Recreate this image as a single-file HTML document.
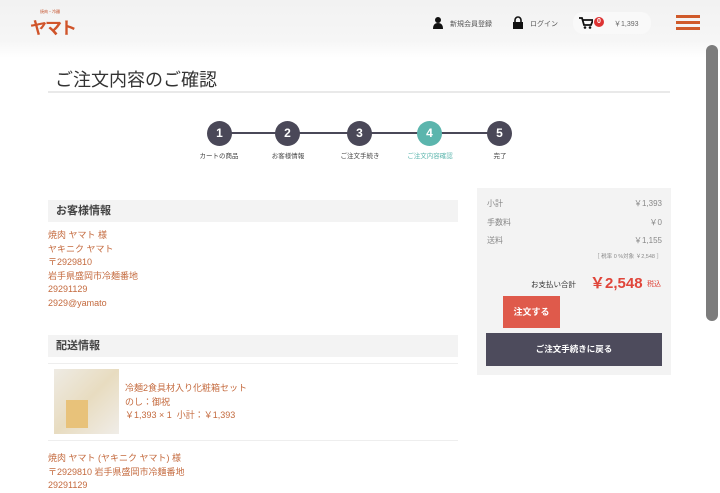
<!DOCTYPE html><html><head><meta charset="utf-8"><style>
*{margin:0;padding:0;box-sizing:border-box}
body{width:720px;height:484px;overflow:hidden;background:#fff;font-family:"Liberation Sans","Noto Sans CJK JP",sans-serif;position:relative}
.a{position:absolute}
.o{color:#c46a3e;font-size:9px;line-height:13.6px}
.c{width:25px;height:25px;border-radius:50%;background:#4a4858;color:#fff;font-weight:bold;font-size:12px;text-align:center;line-height:25px;top:121px}
.l{font-size:6.5px;color:#444;top:150px;width:80px;text-align:center}
.r{font-size:8px;color:#888;left:487px;width:175px}
.r span{float:right}
</style></head><body>
<div class="a" style="left:0;top:0;width:720px;height:58px;background:linear-gradient(#f2f2f2,#f6f6f6 70%,#fff)"></div>
<div class="a" style="left:40px;top:9px;font-size:4px;color:#c4502a">焼肉・冷麺</div>
<div class="a" style="left:30px;top:14px;font-size:17px;font-weight:bold;color:#d0542a;letter-spacing:-2px">ヤマト</div>
<svg class="a" style="left:433px;top:17px" width="10" height="12" viewBox="0 0 10 12"><circle cx="5" cy="3" r="3" fill="#111"/><path d="M0 12 Q0 6 5 6 Q10 6 10 12Z" fill="#111"/></svg>
<div class="a" style="left:450px;top:19px;font-size:7px;color:#555">新規会員登録</div>
<svg class="a" style="left:513px;top:16px" width="10" height="13" viewBox="0 0 10 13"><path d="M2 6V4a3 3 0 0 1 6 0v2" stroke="#111" stroke-width="1.6" fill="none"/><rect x="0" y="6" width="10" height="7" fill="#111"/></svg>
<div class="a" style="left:530px;top:19px;font-size:7px;color:#555">ログイン</div>
<div class="a" style="left:573px;top:12px;width:78px;height:22px;background:#f9f9f9;border-radius:10px"></div>
<svg class="a" style="left:579px;top:17px" width="14" height="12" viewBox="0 0 14 12"><path d="M0 1h3l2 7h7l2-5H4" stroke="#111" stroke-width="1.8" fill="none"/><circle cx="6" cy="10.5" r="1.3" fill="#111"/><circle cx="11" cy="10.5" r="1.3" fill="#111"/></svg>
<div class="a" style="left:594px;top:17px;width:10px;height:10px;border-radius:50%;background:#d33;color:#fff;font-size:7px;text-align:center;line-height:10px;font-weight:bold">0</div>
<div class="a" style="left:614px;top:19px;font-size:7px;color:#666">￥1,393</div>
<div class="a" style="left:676px;top:15px;width:24px;height:3px;background:#d05a2a;box-shadow:0 6px 0 #d05a2a,0 12px 0 #d05a2a"></div>
<div class="a" style="left:706px;top:45px;width:12px;height:276px;background:#7c7c7c;border-radius:6px"></div>
<div class="a" style="left:55px;top:66px;font-size:18px;color:#333">ご注文内容のご確認</div>
<div class="a" style="left:48px;top:91px;width:622px;height:2px;background:#e9e9e9"></div>
<div class="a" style="left:220px;top:132px;width:280px;height:2px;background:#4a4858"></div>
<div class="a c" style="left:207px">1</div><div class="a c" style="left:275px">2</div><div class="a c" style="left:347px">3</div><div class="a c" style="left:417px;background:#5bb5ad">4</div><div class="a c" style="left:487px">5</div>
<div class="a l" style="left:179px">カートの商品</div><div class="a l" style="left:248px">お客様情報</div><div class="a l" style="left:320px">ご注文手続き</div><div class="a l" style="left:390px;color:#5bb5ad">ご注文内容確認</div><div class="a l" style="left:460px">完了</div>
<div class="a" style="left:48px;top:200px;width:410px;height:22px;background:#f3f3f3;font-size:11px;font-weight:bold;color:#444;padding-left:8px;line-height:22px">お客様情報</div>
<div class="a o" style="left:48px;top:229px">焼肉 ヤマト 様<br>ヤキニク ヤマト<br>〒2929810<br>岩手県盛岡市冷麺番地<br>29291129<br>2929@yamato</div>
<div class="a" style="left:48px;top:335px;width:410px;height:22px;background:#f3f3f3;font-size:11px;font-weight:bold;color:#444;padding-left:8px;line-height:22px">配送情報</div>
<div class="a" style="left:48px;top:363px;width:410px;height:1px;background:#eee"></div>
<div class="a" style="left:54px;top:369px;width:65px;height:65px;background:linear-gradient(135deg,#eeebe4,#e8dcc0 50%,#f0ede8)"></div>
<div class="a" style="left:66px;top:400px;width:22px;height:28px;background:#e8c27a"></div>
<div class="a o" style="left:125px;top:382px">冷麺2食具材入り化粧箱セット<br>のし：御祝<br>￥1,393 × 1 &nbsp;小計：￥1,393</div>
<div class="a" style="left:48px;top:440px;width:410px;height:1px;background:#eee"></div>
<div class="a o" style="left:48px;top:452px">焼肉 ヤマト (ヤキニク ヤマト) 様<br>〒2929810 岩手県盛岡市冷麺番地<br>29291129</div>
<div class="a" style="left:477px;top:188px;width:194px;height:187px;background:#f3f3f3"></div>
<div class="a r" style="top:198px">小計<span>￥1,393</span></div>
<div class="a r" style="top:217px">手数料<span>￥0</span></div>
<div class="a r" style="top:235px">送料<span>￥1,155</span></div>
<div class="a r" style="top:252px;font-size:5.5px;text-align:right">［ 税率 0 %対象 ￥2,548 ］</div>
<div class="a" style="left:531px;top:279px;font-size:7.5px;color:#333">お支払い合計</div>
<div class="a" style="left:590px;top:272px;font-size:15px;font-weight:bold;color:#e0453a">￥2,548</div>
<div class="a" style="left:647px;top:279px;font-size:7px;color:#e0453a">税込</div>
<div class="a" style="left:503px;top:296px;width:57px;height:32px;background:#df5a4b;color:#fff;font-size:9px;font-weight:bold;text-align:center;line-height:32px">注文する</div>
<div class="a" style="left:486px;top:333px;width:176px;height:33px;background:#4d4b5c;color:#fff;font-size:8.5px;font-weight:bold;text-align:center;line-height:33px">ご注文手続きに戻る</div>
</body></html>
